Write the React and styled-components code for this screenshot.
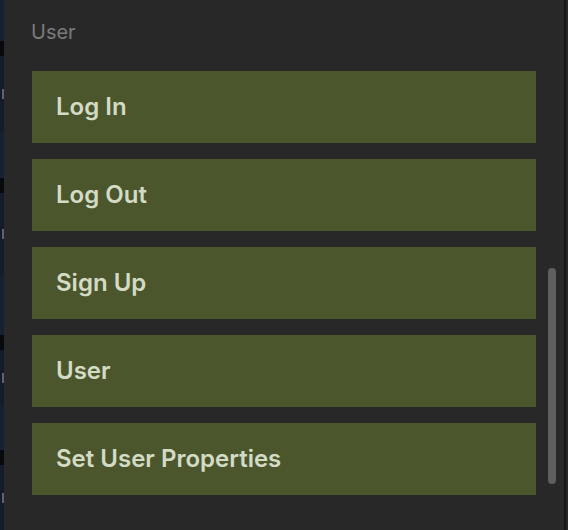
import React from 'react'
import styled, { createGlobalStyle } from 'styled-components'

const GlobalStyle = createGlobalStyle`
  html, body {
    margin: 0;
    padding: 0;
    background: #131d2b;
    font-family: Inter, "Noto Sans", "Liberation Sans", sans-serif;
  }
`

const Screen = styled.div`
  display: flex;
  width: 568px;
  height: 530px;
  overflow: hidden;
`

const Backdrop = styled.div`
  width: 4px;
  display: flex;
  flex-direction: column;
  flex-shrink: 0;
`

const Segment = styled.div`
  height: ${(p) => p.h}px;
  background: ${(p) => p.color};
  display: flex;
  align-items: center;
  justify-content: flex-end;

  &::after {
    content: '';
    display: ${(p) => (p.mark ? 'block' : 'none')};
    width: 2px;
    height: 10px;
    background: #5d6470;
  }
`

const Panel = styled.div`
  position: relative;
  flex: 1;
  background: #282828;
  padding: 20px 28px 0 28px;
  display: flex;
  flex-direction: column;
`

const SectionLabel = styled.div`
  font-size: 20px;
  line-height: 24px;
  color: #7b7b7b;
  margin-left: -1px;
  margin-bottom: 27px;
`

const List = styled.div`
  display: flex;
  flex-direction: column;
  gap: 16px;
`

const ActionButton = styled.button`
  height: 72px;
  border: none;
  border-radius: 0;
  background: #4b562d;
  color: #d3dbc5;
  font-family: inherit;
  font-size: 24px;
  font-weight: 600;
  text-align: left;
  padding: 0 24px 2px 24px;
  display: flex;
  align-items: center;
  cursor: pointer;
`

const ScrollThumb = styled.div`
  position: absolute;
  right: 8px;
  top: 268px;
  width: 8px;
  height: 216px;
  border-radius: 4px;
  background: #5e5e5e;
`

const Edge = styled.div`
  width: 4px;
  flex-shrink: 0;
  display: flex;
  background: #262626;

  &::before {
    content: '';
    width: 2px;
    background: #171717;
  }
`

const backdrop = [
  { h: 41, color: '#152030' },
  { h: 15, color: '#07090c' },
  { h: 76, color: '#121c2a', mark: true },
  { h: 46, color: '#162131' },
  { h: 15, color: '#07090c' },
  { h: 82, color: '#121c2a', mark: true },
  { h: 60, color: '#152030' },
  { h: 15, color: '#07090c' },
  { h: 55, color: '#121c2a', mark: true },
  { h: 45, color: '#162131' },
  { h: 15, color: '#07090c' },
  { h: 65, color: '#121c2a', mark: true },
]

const actions = ['Log In', 'Log Out', 'Sign Up', 'User', 'Set User Properties']

export default function App() {
  return (
    <>
      <GlobalStyle />
      <Screen>
        <Backdrop>
          {backdrop.map((s, i) => (
            <Segment key={i} h={s.h} color={s.color} mark={s.mark} />
          ))}
        </Backdrop>
        <Panel>
          <SectionLabel>User</SectionLabel>
          <List>
            {actions.map((a) => (
              <ActionButton key={a}>{a}</ActionButton>
            ))}
          </List>
          <ScrollThumb />
        </Panel>
        <Edge />
      </Screen>
    </>
  )
}
